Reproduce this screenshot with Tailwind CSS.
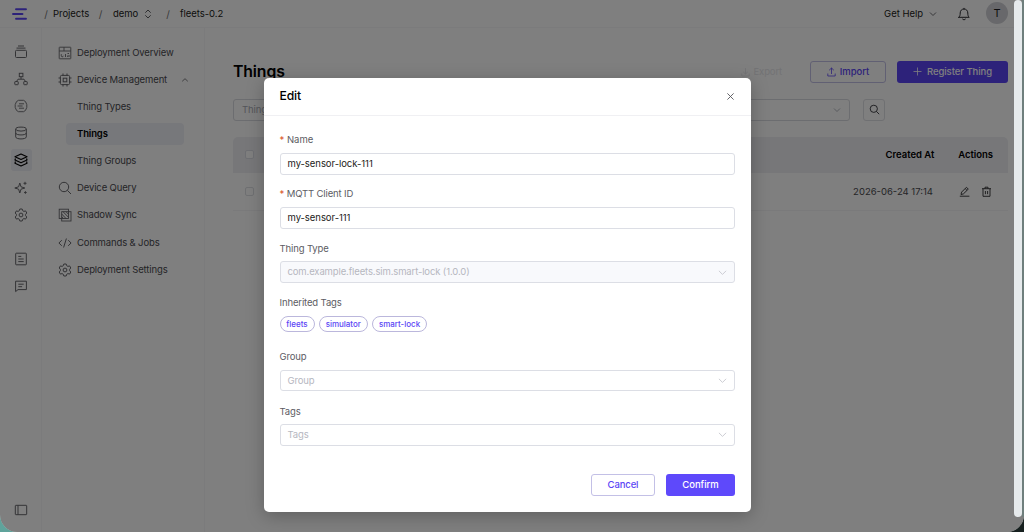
<!DOCTYPE html>
<html lang="en">

<head>
  <meta charset="UTF-8">
  <meta name="viewport" content="width=device-width, initial-scale=1.0">
  <title>Things - fleets-0.2</title>
  <script src="https://cdn.jsdelivr.net/npm/@tailwindcss/browser@4"></script>
</head>

<body class="font-['Inter',sans-serif] bg-[linear-gradient(90deg,#5fa39b_50%,#16201f_50%)] text-[9.5px] tracking-[-0.13px] leading-[14px] text-[#4a4a4f] h-[532px] overflow-hidden">
  <div class="relative w-full h-[532px] bg-white rounded-b-[17px] overflow-hidden flex flex-col">

    <!-- Top bar -->
    <header class="h-7 shrink-0 flex items-center border-b border-[#f6f6f8] pl-3 pr-4 tracking-[-0.03px] text-[#1c1c20]">
      <svg class="w-4 h-3.5 shrink-0" viewBox="0 0 16 14" fill="none" stroke="#5b45f5" stroke-width="1.9" stroke-linecap="round">
        <path d="M4 2.200h10M1 7h9.500M4 11.800h10" />
      </svg>
      <div class="w-[25px] pl-[11px] text-center text-neutral-500 text-[10px]">/</div>
      <a class="w-[35px] whitespace-nowrap">Projects</a>
      <span class="w-[25px] text-center text-neutral-500 text-[10px]">/</span>
      <a class="w-[26px]">demo</a>
      <svg class="ml-[5px] w-2 h-2.5" viewBox="0 0 8 10" fill="none" stroke="#4a4a4f" stroke-width=".9"><path d="M1.300 3.700 4 1l2.700 2.700M1.300 6.300 4 9l2.700-2.700" /></svg>
      <span class="w-[28px] pl-[4px] text-center text-neutral-500 text-[10px]">/</span>
      <a>fleets-0.2</a>
      <div class="ml-auto flex items-center">
        <span>Get Help</span>
        <svg class="ml-[6px] w-2 h-2" viewBox="0 0 8 8" fill="none" stroke="#4a4a4f" stroke-width=".8"><path d="M1 2.500 4 5.500 7 2.500" /></svg>
        <svg class="ml-[20px] w-[14px] h-[14px]" viewBox="0 0 14 14" fill="none" stroke="#2a2a2f" stroke-width="1" stroke-linecap="round" stroke-linejoin="round"><path d="M7 1.300v.7M1.800 10.300h10.400c-1-.9-1.400-2-1.400-4.300C10.800 3.600 9.200 2 7 2S3.200 3.600 3.200 6c0 2.300-.4 3.400-1.400 4.300ZM5.600 12.200c.6.8 2.200.8 2.800 0" /></svg>
        <span class="ml-[15px] w-[22px] h-[22px] rounded-full bg-[#d0d1d6] grid place-items-center text-[11px] -mt-px">T</span>
      </div>
    </header>

    <div class="flex flex-1 min-h-0">
      <!-- Icon rail -->
      <nav class="w-[42px] shrink-0 border-r border-[#f6f6f8] pt-[10.500px] pb-2 pl-[1.500px] flex flex-col items-center text-[#66666b]">
        <div class="w-[21px] h-[27.100px] grid place-items-center">
          <svg class="w-[14px] h-[14px]" viewBox="0 0 14 14" fill="none" stroke="currentColor"><path d="M4 1h6M2.500 3.100h9" /><rect x="1.500" y="5.300" width="11" height="7.200" rx="1" /></svg>
        </div>
        <div class="w-[21px] h-[27.100px] grid place-items-center">
          <svg class="w-[14px] h-[14px]" viewBox="0 0 14 14" fill="none" stroke="currentColor"><rect x="5.300" y="1.300" width="3.600" height="3.400" /><rect x=".8" y="9.500" width="3.400" height="3.200" rx=".5" /><rect x="9.800" y="9.500" width="3.400" height="3.200" rx=".5" /><path d="M7 4.700v2.500M2.500 9.500 4 7.200h6l1.500 2.300" /></svg>
        </div>
        <div class="w-[21px] h-[27.100px] grid place-items-center">
          <svg class="w-[14px] h-[14px]" viewBox="0 0 14 14" fill="none" stroke="currentColor" stroke-width=".9" stroke-linejoin="round"><path d="M4.500 1.300h5l2 1.300 1.300 3v2.800l-1.300 3-2 1.300h-5l-2-1.300-1.300-3V5.600l1.300-3ZM5 4.800h5M3.600 7h5M5 9.200h5" /></svg>
        </div>
        <div class="w-[21px] h-[27.100px] grid place-items-center">
          <svg class="w-[14px] h-[14px]" viewBox="0 0 14 14" fill="none" stroke="currentColor"><ellipse cx="7" cy="3.100" rx="5.300" ry="2" /><path d="M1.700 3.100v7.800c0 2.700 10.600 2.700 10.600 0V3.100M1.700 7c0 2.600 10.600 2.600 10.600 0" /></svg>
        </div>
        <div class="w-[21px] h-[27.100px] grid place-items-center">
          <div class="w-[21px] h-[22px] rounded-[3px] bg-[#eff0f6] grid place-items-center text-black">
            <svg class="w-[14px] h-[14px]" viewBox="0 0 14 14" fill="none" stroke="currentColor" stroke-width="1.200" stroke-linejoin="round"><path d="M7 1 13 3.800 7 6.500 1 3.800ZM1.500 5.500 1 7l6 2.800L13 7l-.5-1.500M1.500 8.500 1 10.200 7 13l6-2.800-.5-1.700" /></svg>
          </div>
        </div>
        <div class="w-[21px] h-[27.100px] grid place-items-center">
          <svg class="w-[14px] h-[14px]" viewBox="0 0 14 14" fill="none" stroke="currentColor" stroke-linejoin="round"><path d="M5.800 2 7 5.800 10.800 7 7 8.200 5.800 12 4.600 8.200.8 7l3.800-1.200ZM11 .8v3M9.500 2.300h3M11.400 10.200v2.600M10.100 11.500h2.600" /></svg>
        </div>
        <div class="w-[21px] h-[27.100px] grid place-items-center">
          <svg class="w-[14px] h-[14px]" viewBox="0 0 14 14" fill="none" stroke="currentColor" stroke-linejoin="round"><path d="M5.800 1h2.400l.5 1.700 1.200.7 1.700-.5 1.200 2.100L11.600 6.300v1.400l1.200 1.300-1.200 2.100-1.700-.5-1.200.7L8.200 13H5.800l-.5-1.700-1.200-.7-1.700.5L1.200 9l1.200-1.300V6.300L1.200 5l1.200-2.100 1.700.5 1.200-.7Z" /><circle cx="7" cy="7" r="1.900" /></svg>
        </div>
        <div class="w-[21px] h-[27.100px] mt-[17px] grid place-items-center">
          <svg class="w-[14px] h-[14px]" viewBox="0 0 14 14" fill="none" stroke="currentColor"><rect x="1.700" y="1.200" width="10.600" height="11.600" rx=".5" /><path d="M4.300 4.400h3M4.300 7h5.400M4.300 9.600h5.400" /></svg>
        </div>
        <div class="w-[21px] h-[27.100px] grid place-items-center">
          <svg class="w-[14px] h-[14px]" viewBox="0 0 14 14" fill="none" stroke="currentColor" stroke-linejoin="round"><path d="M1.600 2.200h10.800v8.400H4l-2.400 2ZM4.300 5.200h5.400M4.300 7.700h3.800" /></svg>
        </div>
        <svg class="mt-auto mb-[7px] w-[14px] h-[14px]" viewBox="0 0 14 14" fill="none" stroke="currentColor"><rect x="1.300" y="2.300" width="11.400" height="9.400" rx=".5" /><path d="M4 2.300v9.400" /></svg>
      </nav>

      <!-- Project menu -->
      <aside class="w-[163px] shrink-0 border-r border-[#f6f6f8] pt-[11.300px] pl-4 pr-5">
        <div class="h-[27.100px] flex items-center gap-[5px]">
          <svg class="w-[14px] h-[14px] text-[#66666b]" viewBox="0 0 14 14" fill="none" stroke="currentColor" stroke-width=".9"><rect x="1.200" y="1.200" width="11.600" height="11.600" rx=".4" /><path d="M1.200 5h11.600M6 1.200V5M3.300 8.200v1.600c0 1.300 2 1.300 2 0M7.500 11V8M9.700 11V9.500M11 7.500H9.500M11 11V9" /></svg>
          <span>Deployment Overview</span>
        </div>
        <div class="h-[27.100px] flex items-center gap-[5px]">
          <svg class="w-[14px] h-[14px] text-[#66666b]" viewBox="0 0 14 14" fill="none" stroke="currentColor"><rect x="2.400" y="2.400" width="9.200" height="9.200" rx="1.200" /><rect x="5.200" y="5.200" width="3.600" height="3.600" /><path d="M5 .5v1.900M9 .5v1.900M5 11.600v1.900M9 11.600v1.900M.5 5h1.900M.5 9h1.900M11.600 5h1.900M11.600 9h1.900" /></svg>
          <span>Device Management</span>
          <svg class="ml-auto -mr-[5px] w-2 h-2" viewBox="0 0 8 8" fill="none" stroke="currentColor" stroke-width=".7"><path d="M1.200 5.300 4 2.700l2.800 2.600" /></svg>
        </div>
        <div class="h-[27.100px] flex items-center pl-[19px]">Thing Types</div>
        <div class="h-[27.100px] flex items-center pl-2">
          <div class="h-[22.500px] w-full rounded-[4px] bg-[#eff0f6] flex items-center pl-[11px] font-semibold text-black">Things</div>
        </div>
        <div class="h-[27.100px] flex items-center pl-[19px]">Thing Groups</div>
        <div class="h-[27.100px] flex items-center gap-[5px]">
          <svg class="w-[14px] h-[14px] text-[#66666b]" viewBox="0 0 14 14" fill="none" stroke="currentColor"><circle cx="6" cy="6" r="4.700" /><path d="m9.400 9.400 3.600 3.600" /></svg>
          <span>Device Query</span>
        </div>
        <div class="h-[27.100px] flex items-center gap-[5px]">
          <svg class="w-[14px] h-[14px] text-[#66666b]" viewBox="0 0 14 14" fill="none" stroke="currentColor" stroke-width=".9"><rect x="1.200" y="1.200" width="9.300" height="9.300" /><rect x="3.700" y="3.700" width="9.300" height="9.300" /><path d="M3.700 6 8 10.500M5 3.700l5.500 5.600M8 3.700l2.500 2.600M5.500 10.500 3.700 8.600" /></svg>
          <span>Shadow Sync</span>
        </div>
        <div class="h-[27.100px] flex items-center gap-[5px]">
          <svg class="w-[14px] h-[14px] text-[#66666b]" viewBox="0 0 14 14" fill="none" stroke="currentColor"><path d="M3.800 4.200.9 7l2.900 2.800M10.200 4.200 13.100 7l-2.900 2.800M8.400 2.500l-2.800 9" /></svg>
          <span>Commands &amp; Jobs</span>
        </div>
        <div class="h-[27.100px] flex items-center gap-[5px]">
          <svg class="w-[14px] h-[14px] text-[#66666b]" viewBox="0 0 14 14" fill="none" stroke="currentColor" stroke-linejoin="round"><path d="M5.800 1h2.400l.5 1.700 1.200.7 1.700-.5 1.200 2.100L11.600 6.300v1.400l1.200 1.300-1.200 2.100-1.700-.5-1.200.7L8.200 13H5.800l-.5-1.700-1.200-.7-1.700.5L1.200 9l1.200-1.300V6.300L1.200 5l1.200-2.100 1.700.5 1.200-.7Z" /><circle cx="7" cy="7" r="1.900" /></svg>
          <span>Deployment Settings</span>
        </div>
      </aside>

      <!-- Things list -->
      <main class="flex-1 pl-7 pr-4 pt-8">
        <div class="flex items-center h-[23px]">
          <h1 class="text-[15.800px] font-semibold text-black">Things</h1>
          <span class="ml-auto mr-[28px] flex items-center gap-1 text-[#e6e6ea]">
            <svg class="w-[9px] h-[10px]" viewBox="0 0 9 10" fill="none" stroke="currentColor" stroke-width=".9"><path d="M4.500 1v6M2.200 4.800 4.500 7l2.300-2.200M.8 6.500V9h7.400V6.500" /></svg>
            Export
          </span>
          <button class="w-[76px] h-[22px] border border-[#c3c0e6] rounded-[3px] flex items-center justify-center gap-1 font-medium tracking-normal text-[#5b45f5]">
            <svg class="w-[9px] h-[10px]" viewBox="0 0 9 10" fill="none" stroke="currentColor" stroke-width=".8"><path d="M4.500 7V1M2.200 3.200 4.500 1l2.300 2.200M.8 6.500V9h7.400V6.500" /></svg>
            Import
          </button>
          <button class="ml-[11px] w-[111px] h-[22px] rounded-[3px] bg-[#5b45f5] flex items-center justify-center gap-[5px] font-medium tracking-[-0.05px] text-white">
            <svg class="w-[9px] h-[9px]" viewBox="0 0 9 9" fill="none" stroke="currentColor" stroke-width=".8"><path d="M4.500.5v8M.5 4.500h8" /></svg>
            Register Thing
          </button>
        </div>
        <div class="flex mt-[15.500px]">
          <div class="w-[617px] h-[22px] border border-[#d9dae0] rounded-[3px] flex items-center justify-between px-2 text-[#a9abb5]">
            <span>Thing</span>
            <svg class="w-2 h-2" viewBox="0 0 8 8" fill="none" stroke="currentColor" stroke-width=".9"><path d="M1 2.500 4 5.500 7 2.500" /></svg>
          </div>
          <button class="ml-[13px] w-[22px] h-[22px] border border-[#dfe0e5] rounded-[3px] grid place-items-center text-[#303035]">
            <svg class="w-[11px] h-[11px]" viewBox="0 0 11 11" fill="none" stroke="currentColor" stroke-width=".9"><circle cx="4.800" cy="4.800" r="3.600" /><path d="m7.500 7.500 2.700 2.700" /></svg>
          </button>
        </div>

        <div class="mt-4 rounded-t-[5px] overflow-hidden">
          <div class="h-[36.500px] bg-[#eeeff3] flex items-center pl-3 pr-[15px] font-semibold tracking-[-0.03px] text-black">
            <span class="w-[9px] h-[9px] border border-[#dddee6] bg-white rounded-[2px]"></span>
            <span class="ml-auto">Created At</span>
            <span class="ml-6">Actions</span>
          </div>
          <div class="h-[38px] border-b border-[#f4f4f6] flex items-center pl-3 pr-4 tracking-normal">
            <span class="w-[9px] h-[9px] border border-[#dfe0e5] rounded-[2px]"></span>
            <span class="ml-auto">2026-06-24 17:14</span>
            <svg class="ml-[26px] w-[11px] h-[11px]" viewBox="0 0 11 11" fill="none" stroke="#2c2c30" stroke-width=".9" stroke-linejoin="round"><path d="M.8 10.200h9.600M2 8.500l.6-2.400L7.400 1.300l1.900 1.800-4.900 4.800ZM6.200 2.600l1.800 1.800" /></svg>
            <svg class="ml-[11px] w-[11px] h-[11px]" viewBox="0 0 11 11" fill="none" stroke="#2c2c30" stroke-width=".9"><path d="M1 2.700h9M4 2.700V1.200h3v1.500M2 2.700v7.600h7V2.700M4.400 5v3.200M6.600 5v3.200" /></svg>
          </div>
        </div>
      </main>
    </div>

    <!-- Dimmed backdrop with the edit dialog -->
    <div class="absolute inset-0 bg-black/50 pt-[77.500px] pl-[263.500px]">
      <div role="dialog" class="w-[487.500px] h-[434.500px] bg-white rounded-[5px] shadow-[0_4px_18px_rgba(0,0,0,0.25)] flex flex-col">
        <div class="h-[38px] shrink-0 border-b border-[#f0f0f3] flex items-center justify-between pl-4 pr-4">
          <h2 class="text-[12.200px] font-medium text-black">Edit</h2>
          <svg class="w-[9px] h-[9px]" viewBox="0 0 9 9" fill="none" stroke="#55555a" stroke-width=".9"><path d="m1.400 1.400 6.200 6.200M7.600 1.400 1.400 7.600" /></svg>
        </div>

        <form class="px-4 pt-[17px] flex flex-col gap-3 text-[#5c5c63]">
          <div class="h-[42.200px]">
            <label class="block h-5 pt-[.8px] mb-[.5px] tracking-normal"><span class="text-[#d9552b]">*</span> Name</label>
            <div class="h-[21.700px] border border-[#dcdee5] rounded-[3px] flex items-center px-[7px] tracking-[-0.05px] text-[#1c1c20]">my-sensor-lock-111</div>
          </div>
          <div class="h-[42.200px]">
            <label class="block h-5 pt-[.8px] mb-[.5px]"><span class="text-[#d9552b]">*</span> MQTT Client ID</label>
            <div class="h-[21.700px] border border-[#dcdee5] rounded-[3px] flex items-center px-[7px] tracking-[-0.05px] text-[#1c1c20]">my-sensor-111</div>
          </div>
          <div class="h-[42.200px]">
            <label class="block h-5 pt-[.8px] mb-[.5px]">Thing Type</label>
            <div class="h-[21.700px] border border-[#dcdee5] bg-[#f8f9fc] rounded-[3px] flex items-center justify-between px-[7px] text-[#b6b7bf]">
              <span>com.example.fleets.sim.smart-lock (1.0.0)</span>
              <svg class="w-[9px] h-[9px]" viewBox="0 0 8 8" fill="none" stroke="#c6c7ce" stroke-width=".8"><path d="M.8 2.500 4 5.700 7.200 2.500" /></svg>
            </div>
          </div>
          <div class="h-[42.200px]">
            <label class="block h-5 pt-[.8px] mb-[.5px]">Inherited Tags</label>
            <div class="flex gap-1 text-[8px] leading-[14px] tracking-[-0.02px] font-medium text-[#5b45f5]">
              <span class="w-[35px] h-4 border border-[#bbb7dc] rounded-full text-center">fleets</span>
              <span class="w-[49.500px] h-4 border border-[#bbb7dc] rounded-full text-center">simulator</span>
              <span class="w-[55px] h-4 border border-[#bbb7dc] rounded-full text-center">smart-lock</span>
            </div>
          </div>
          <div class="h-[42.200px]">
            <label class="block h-5 pt-[1.200px] mb-[.5px]">Group</label>
            <div class="h-[21.700px] border border-[#dcdee5] rounded-[3px] flex items-center justify-between px-[7px] text-[#b6b7bf]">
              <span>Group</span>
              <svg class="w-[9px] h-[9px]" viewBox="0 0 8 8" fill="none" stroke="#c6c7ce" stroke-width=".8"><path d="M.8 2.500 4 5.700 7.200 2.500" /></svg>
            </div>
          </div>
          <div class="h-[42.200px]">
            <label class="block h-5 pt-[1.200px] mb-[.5px]">Tags</label>
            <div class="h-[21.700px] border border-[#dcdee5] rounded-[3px] flex items-center justify-between px-[7px] text-[#b6b7bf]">
              <span>Tags</span>
              <svg class="w-[9px] h-[9px]" viewBox="0 0 8 8" fill="none" stroke="#c6c7ce" stroke-width=".8"><path d="M.8 2.500 4 5.700 7.200 2.500" /></svg>
            </div>
          </div>
        </form>

        <div class="mt-auto pb-4 px-4 flex justify-end gap-[11px] font-medium">
          <button class="w-16 h-[22px] border border-[#c3c0e6] rounded-[3px] text-[#5b45f5]">Cancel</button>
          <button class="w-[69px] h-[22px] rounded-[3px] bg-[#5e49fb] tracking-[-0.02px] text-white">Confirm</button>
        </div>
      </div>
    </div>

    <!-- Scrollbar -->
    <div class="absolute right-0 top-0 w-[2px] h-[517px] bg-[#6f7f7d]"></div>
    <div class="absolute right-[2px] top-0 w-2 h-[517px] rounded-full bg-[#e6eaec]"></div>
  </div>
</body>

</html>
